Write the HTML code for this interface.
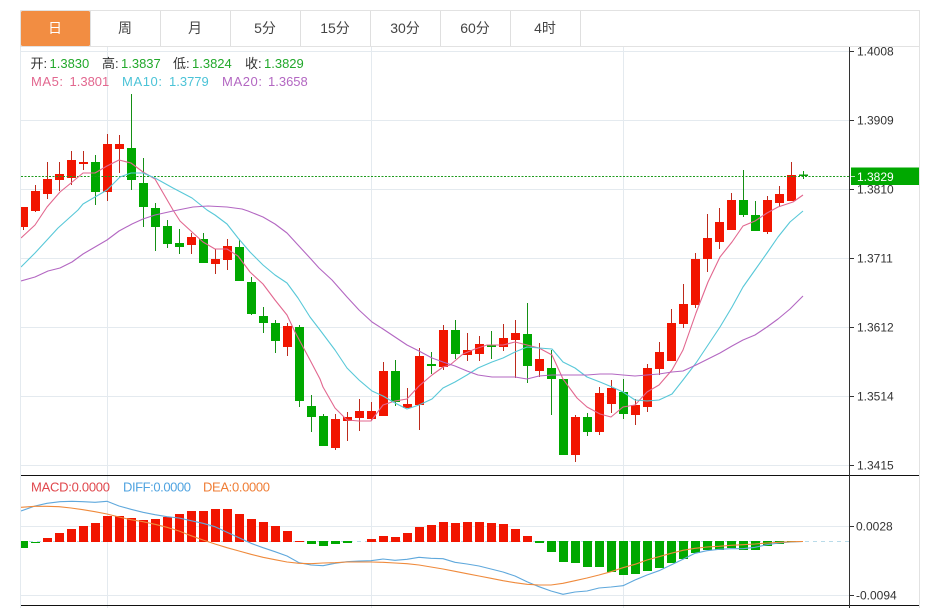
<!DOCTYPE html>
<html><head><meta charset="utf-8"><style>
html,body{margin:0;padding:0;background:#fff;width:926px;height:608px;overflow:hidden}
svg{display:block}
text{font-family:"Liberation Sans","Noto Sans CJK SC",sans-serif}
</style></head><body>
<svg width="926" height="608" viewBox="0 0 926 608" xmlns="http://www.w3.org/2000/svg">
<defs><clipPath id="c"><rect x="21" y="47" width="828" height="561"/></clipPath></defs>
<!-- frame and tabs -->
<path fill="none" stroke="#e2e2e2" d="M20.5 10.5H919.5V608M20.5 10.5V46.5H919.5"/>
<rect x="21" y="11" width="69" height="35" rx="1.5" fill="#f28d42"/>
<path fill="none" stroke="#dfdfdf" d="M160.5 11V46M230.5 11V46M300.5 11V46M370.5 11V46M440.5 11V46M510.5 11V46M580.5 11V46M90.5 11V46"/>
<g font-size="14" text-anchor="middle" fill="#444">
<text x="55" y="33" fill="#fff">日</text><text x="125" y="33">周</text><text x="195" y="33">月</text><text x="265" y="33">5分</text><text x="335" y="33">15分</text><text x="405" y="33">30分</text><text x="475" y="33">60分</text><text x="545" y="33">4时</text>
</g>
<!-- grid -->
<path fill="none" stroke="#e4eaef" d="M20.5 47V608M107.5 47V608M371.5 47V608M623.5 47V608M21 51.5H849M21 120.5H849M21 189.5H849M21 258.5H849M21 327.5H849M21 396.5H849M21 465.5H849M21 526.5H849M21 595.5H849"/>
<path fill="none" stroke="#b9dbe9" stroke-dasharray="4 4" d="M21 541.5H849"/>
<!-- candles -->
<g clip-path="url(#c)">
<path fill="none" stroke="#bd2a1c" d="M23.5 207V230M35.5 185V212M47.5 162V199M59.5 162V191M71.5 151V185M83.5 151V170M107.5 134V201M119.5 135V173M191.5 233V254M215.5 249V274M227.5 239V270M287.5 323V356M335.5 414V450M347.5 412V441M359.5 399V431M371.5 402V421M383.5 362V416M407.5 388V408M419.5 348V430M443.5 325V370M467.5 333V361M479.5 336V361M503.5 324V351M515.5 320V378M539.5 343V377M575.5 415V462M599.5 387V435M611.5 380V413M635.5 399V425M647.5 364V412M659.5 342V375M671.5 309V361M683.5 284V328M695.5 253V308M707.5 214V272M719.5 208V249M731.5 193V230M767.5 196V234M779.5 186V207M791.5 162V201"/>
<path fill="none" stroke="#158f15" d="M95.5 155V205M131.5 94V190M143.5 158V227M155.5 203V251M167.5 220V248M179.5 229V254M203.5 233V263M239.5 240V281M251.5 277V315M263.5 307V333M275.5 320V353M299.5 325V407M311.5 395V432M323.5 414V446M395.5 360V406M431.5 352V374M455.5 320V359M491.5 331V359M527.5 303V383M551.5 350V415M563.5 379V455M587.5 413V436M623.5 379V419M743.5 170V217M755.5 201V231"/>
<path fill="#f11500" d="M19 207h9v20h-9zM31 191h9v20h-9zM43 179h9v15h-9zM55 174h9v6h-9zM67 160h9v18h-9zM79 162h9v2h-9zM103 144h9v48h-9zM115 144h9v5h-9zM187 237h9v8h-9zM211 259h9v5h-9zM223 246h9v14h-9zM283 326h9v21h-9zM331 419h9v29h-9zM343 417h9v4h-9zM355 411h9v7h-9zM367 411h9v8h-9zM379 371h9v45h-9zM403 404h9v4h-9zM415 356h9v49h-9zM439 330h9v37h-9zM463 350h9v5h-9zM475 344h9v10h-9zM499 338h9v9h-9zM511 333h9v7h-9zM535 359h9v12h-9zM571 417h9v38h-9zM595 393h9v39h-9zM607 388h9v16h-9zM631 405h9v10h-9zM643 368h9v39h-9zM655 352h9v17h-9zM667 323h9v38h-9zM679 304h9v20h-9zM691 259h9v46h-9zM703 238h9v21h-9zM715 222h9v20h-9zM727 200h9v30h-9zM763 200h9v32h-9zM775 194h9v9h-9zM787 175h9v26h-9z"/>
<path fill="#00a800" d="M91 162h9v30h-9zM127 148h9v32h-9zM139 183h9v24h-9zM151 208h9v19h-9zM163 226h9v18h-9zM175 243h9v4h-9zM199 239h9v24h-9zM235 247h9v34h-9zM247 282h9v32h-9zM259 316h9v7h-9zM271 323h9v18h-9zM295 327h9v74h-9zM307 406h9v11h-9zM319 416h9v30h-9zM391 371h9v31h-9zM427 364h9v2h-9zM451 330h9v24h-9zM487 345h9v2h-9zM523 334h9v32h-9zM547 368h9v11h-9zM559 379h9v76h-9zM583 417h9v15h-9zM619 392h9v22h-9zM739 200h9v15h-9zM751 215h9v16h-9z"/>
<!-- dotted last price -->
<path fill="none" stroke="#1d9a1d" stroke-dasharray="2 1.5" d="M21 176.5H849"/>
<!-- last candle plus, above the dotted line -->
<path fill="#0a9e0a" d="M799 174.5h9v1.5h-9zM803 171h1v8h-1z"/>
<!-- MA lines -->
<g fill="none" stroke-width="1.1" stroke-linejoin="round">
<path stroke="#e2678f" d="M21 238L35 225L47 207L60 192L71 183L83 173L95 173L107 166L119 160L131 163L143 172L155 179L173 210L180 221L192 232L203 242L215 249L227 249L238 256L250 272L263 284L275 300L287 315L295 332L310 360L320 379L323 387L335 408L347 420L359 421L371 421L383 405L395 401L407 399L419 386L432 375L443 367L450 365L463 354L475 349L487 345L503 345L515 342L527 345L539 348L552 355L563 379L577 398L587 407L600 414L611 417L623 407L635 405L647 392L659 385L672 370L683 350L696 313L708 282L720 257L732 242L743 226L755 221L767 213L778 207L793 202L803 195"/>
<path stroke="#58c8d8" d="M21 267L35 253L47 240L58 228L78 210L83 204L95 197L107 190L120 177L131 173L143 173L155 178L173 188L192 198L207 210L215 215L227 224L238 238L250 252L263 265L275 275L287 283L298 298L310 317L320 330L335 350L347 368L359 380L372 391L383 396L395 403L407 409L419 405L432 399L443 388L455 382L467 375L478 368L492 362L503 358L515 352L527 347L539 348L552 349L563 362L575 368L587 377L600 382L612 387L623 392L635 400L647 401L659 400L672 394L683 380L696 363L708 345L720 327L732 307L743 287L755 270L767 253L778 237L790 222L803 211"/>
<path stroke="#b367c2" d="M21 281L35 277L48 271L60 268L72 262L83 254L95 247L107 240L119 231L132 224L143 219L155 215L173 211L183 209L193 207L208 206L227 207L242 209L248 211L263 217L275 224L287 233L298 245L310 258L319 268L332 280L347 297L359 310L372 322L383 329L395 337L407 345L419 351L432 358L443 362L455 366L467 371L478 375L492 377L503 377L515 377L527 379L539 376L552 375L563 375L587 375L600 374L612 374L623 375L635 376L647 375L659 374L672 372L683 371L696 365L708 359L720 353L732 346L743 340L755 335L767 327L778 319L790 309L803 296"/>
</g>
<!-- MACD bars -->
<path fill="#f11500" d="M43 538h9v4h-9zM55 533h9v9h-9zM67 529h9v13h-9zM79 526h9v16h-9zM91 523h9v19h-9zM103 516h9v26h-9zM115 516h9v26h-9zM127 518h9v24h-9zM139 520h9v22h-9zM151 519h9v23h-9zM163 517h9v25h-9zM175 514h9v28h-9zM187 511h9v31h-9zM199 511h9v31h-9zM211 509h9v33h-9zM223 509h9v33h-9zM235 514h9v28h-9zM247 519h9v23h-9zM259 522h9v20h-9zM271 526h9v16h-9zM283 531h9v11h-9zM295 541h9v1h-9zM367 539h9v3h-9zM379 536h9v6h-9zM391 537h9v5h-9zM403 533h9v9h-9zM415 527h9v15h-9zM427 525h9v17h-9zM439 522h9v20h-9zM451 523h9v19h-9zM463 522h9v20h-9zM475 522h9v20h-9zM487 523h9v19h-9zM499 524h9v18h-9zM511 529h9v13h-9zM523 536h9v6h-9z"/>
<path fill="#00a800" d="M19 541h9v7h-9zM31 542h9v1h-9zM307 541h9v3h-9zM319 541h9v5h-9zM331 541h9v3h-9zM343 541h9v2h-9zM535 541h9v2h-9zM547 541h9v11h-9zM559 541h9v21h-9zM571 541h9v22h-9zM583 541h9v26h-9zM595 541h9v26h-9zM607 541h9v31h-9zM619 541h9v34h-9zM631 541h9v33h-9zM643 541h9v30h-9zM655 541h9v27h-9zM667 541h9v22h-9zM679 541h9v18h-9zM691 541h9v12h-9zM703 541h9v9h-9zM715 541h9v9h-9zM727 541h9v7h-9zM739 541h9v9h-9zM751 541h9v9h-9zM763 541h9v5h-9zM775 541h9v3h-9zM787 541h9v1h-9z"/>
<g fill="none" stroke-width="1.1" stroke-linejoin="round">
<path stroke="#5fa8dc" d="M21 511L35 506L47 503.3L60 501.7L72 501.3L83 501.7L95 502.3L107 501.3L119 506L131 509.3L143 512.3L155 514.7L167 516.7L179 518L191 520.7L203 523.3L215 526.7L227 532.3L239 537.7L251 543.3L263 547.7L275 551.7L287 556L299 562.7L311 565L323 565.7L335 563.3L347 561.7L359 561L371 560.7L383 559L395 560.3L407 559.3L419 557.3L431 558.3L443 558.7L455 562.3L467 564L479 566L491 569L503 572L515 576L527 581.7L539 586.7L551 591L563 594.3L575 592L587 591L599 588L611 587L623 585.7L635 580L647 575L659 570.7L671 565L683 559.3L695 553.3L707 550.7L719 549.3L731 548.7L743 548.7L755 547.3L767 544.7L779 543L791 542L803 541.5"/>
<path stroke="#ef8a3c" d="M21 507.3L35 506.3L47 506.3L59 506.7L71 508L83 509.7L95 511.7L107 514L119 517L131 519.7L143 521.7L155 524.3L167 527.3L179 531L191 535.7L203 540L215 544L227 547.7L239 551L251 554.3L263 557.3L275 559.7L287 562L299 563.3L311 563.7L323 563L335 562.7L347 562L371 562L383 562.3L395 563L407 563.7L419 565L431 567L443 569L455 571.3L467 573.7L479 576L491 578.3L503 580.7L515 582.7L527 584.3L539 585L551 585L563 583.3L575 580.7L587 578L599 575L611 571.7L623 567.7L635 564.3L647 560L659 556.7L671 553.3L683 550.3L695 548.3L707 547L719 546.3L731 545.3L743 544.7L755 544L767 543L779 542.3L791 541.7L803 541.5"/>
</g>
</g>
<!-- panel separators and axis -->
<path fill="none" stroke="#111" d="M21 475.5H919M21 605.5H919"/>
<path fill="none" stroke="#333" d="M849.5 47V608M850 51.5H854M850 120.5H854M850 189.5H854M850 258.5H854M850 327.5H854M850 396.5H854M850 465.5H854M850 526.5H854M850 595.5H854"/>
<g font-size="12" fill="#333">
<text x="857" y="55.5">1.4008</text><text x="857" y="124.5">1.3909</text><text x="857" y="193.5">1.3810</text><text x="857" y="262.5">1.3711</text><text x="857" y="331.5">1.3612</text><text x="857" y="400.5">1.3514</text><text x="857" y="469.5">1.3415</text><text x="856" y="530.5">0.0028</text><text x="856" y="599.5">-0.0094</text>
</g>
<rect x="851" y="167.5" width="68" height="17.5" fill="#00a800"/>
<path stroke="#b8e6b8" d="M851 176.5H855"/>
<text x="857" y="181" font-size="12" fill="#fff">1.3829</text>
<!-- legends -->
<g font-size="13">
<text x="30.5" y="68" fill="#333">开:</text><text x="49.5" y="68" fill="#22a82b">1.3830</text>
<text x="102" y="68" fill="#333">高:</text><text x="121" y="68" fill="#22a82b">1.3837</text>
<text x="173" y="68" fill="#333">低:</text><text x="192" y="68" fill="#22a82b">1.3824</text>
<text x="245" y="68" fill="#333">收:</text><text x="264" y="68" fill="#22a82b">1.3829</text>
<text x="31" y="86" fill="#e2678f" textLength="32">MA5:</text><text x="69.5" y="86" fill="#e2678f">1.3801</text>
<text x="122" y="86" fill="#4bc3d7" textLength="40">MA10:</text><text x="169" y="86" fill="#4bc3d7">1.3779</text>
<text x="222" y="86" fill="#b367c2" textLength="40">MA20:</text><text x="268" y="86" fill="#b367c2">1.3658</text>
<text x="31" y="491.5" fill="#e0474c" textLength="79">MACD:0.0000</text>
<text x="123" y="491.5" fill="#4fa3e0" textLength="68">DIFF:0.0000</text>
<text x="203" y="491.5" fill="#ef7d35" textLength="67">DEA:0.0000</text>
</g>
</svg>
</body></html>
